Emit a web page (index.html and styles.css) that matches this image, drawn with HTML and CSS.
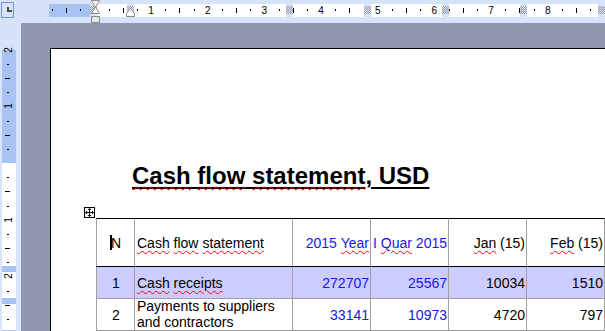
FILE: index.html
```html
<!doctype html>
<html lang="en-US">
<head>
<meta charset="utf-8" />
<meta name="viewport" content="width=device-width" />
<title>Cash flow statement, USD</title>
<link rel="stylesheet" href="styles.css">
</head>
<body>
<div class="app">

<!-- top ruler row: tab selector box + horizontal ruler -->
<div class="topbar">
	<div class="corner"><span class="tabmark"></span></div>
	<div class="hruler" id="hruler">
		<div class="seg-margin" style="width:41px"></div>
		<div class="col-mark"></div>
		<div class="seg" style="width:30px"></div>
		<div class="col-mark"></div>
		<div class="seg" style="width:152px"></div>
		<div class="col-mark"></div>
		<div class="seg" style="width:71px"></div>
		<div class="col-mark"></div>
		<div class="seg" style="width:71px"></div>
		<div class="col-mark"></div>
		<div class="seg" style="width:71px"></div>
		<div class="col-mark"></div>
		<div class="seg" style="width:71px"></div>
		<div class="col-mark"></div>

		<svg class="indent-mark" width="11" height="23" viewBox="0 0 11 23">
			<path d="M1.5 0.5h8l-4 6.5 4 6.5h-8l4-6.5z" fill="#fff" stroke="#8a8a8a" />
			<rect x="1.5" y="16.5" width="8" height="6" fill="#e6e6e6" stroke="#8a8a8a" />
		</svg>
		<svg class="cell-indent" width="9" height="9" viewBox="0 0 9 9">
			<path d="M0.5 8.5v-3l4-5 4 5v3z" fill="#fff" stroke="#8a8a8a" />
		</svg>
	</div>
</div>

<div class="main">
	<!-- vertical ruler -->
	<div class="vcol">
		<div class="vruler" id="vruler">
			<div class="vseg-blue" style="height:113px"></div>
			<div class="vseg" style="height:103px"></div>
			<div class="vseg-blue" style="height:6px"></div>
			<div class="vseg" style="height:26px"></div>
			<div class="vseg-blue" style="height:6px"></div>
			<div class="vseg" style="height:26px"></div>
			<div class="vseg-blue" style="height:1px"></div>
		</div>
	</div>

	<div class="workspace">
		<div class="page">
			<h1 class="title"><span class="sp">Cash</span> <span class="sp">flow</span> <span class="sp">statement</span>, USD</h1>

			<div class="table-wrap">
				<span class="move-handle">
					<svg width="9" height="9" viewBox="0 0 9 9">
						<path d="M4.5 1v7M1 4.5h7" stroke="#000" />
						<path d="M4.5 0l2 2h-4zM4.5 9l2-2h-4zM0 4.5l2-2v4zM9 4.5l-2-2v4z" fill="#000" />
					</svg>
				</span>
				<div class="grid">
					<div class="cell num-col head"><span class="cursor"></span>N</div>
					<div class="cell head">
						<span class="sp">Cash</span>&nbsp;<span class="sp">flow</span>&nbsp;<span class="sp">statement</span>
					</div>
					<div class="cell head right blue">2015&nbsp;<span class="sp">Year</span></div>
					<div class="cell head right blue">I&nbsp;<span class="sp">Quar</span>&nbsp;2015</div>
					<div class="cell head right"><span class="sp">Jan</span>&nbsp;(15)</div>
					<div class="cell head right"><span class="sp">Feb</span>&nbsp;(15)</div>

					<div class="cell num-col hl">1</div>
					<div class="cell hl"><span class="sp">Cash</span>&nbsp;<span class="sp">receipts</span></div>
					<div class="cell hl right blue">272707</div>
					<div class="cell hl right blue">25567</div>
					<div class="cell hl right">10034</div>
					<div class="cell hl right">1510</div>

					<div class="cell num-col">2</div>
					<div class="cell wrap">Payments to suppliers<br>and contractors</div>
					<div class="cell right blue">33141</div>
					<div class="cell right blue">10973</div>
					<div class="cell right">4720</div>
					<div class="cell right">797</div>
				</div>
			</div>
		</div>
	</div>
</div>

</div>

<script>
	// ruler ticks: a quarter step of 1.5 cm is 14.17px, big numbers every 4 steps
	const step = 14.17;
	const hruler = document.getElementById("hruler");
	const vruler = document.getElementById("vruler");

	function tick(parent, cls, prop, value, text) {
		const el = document.createElement("div");
		el.className = cls;
		el.style[prop] = value.toFixed(1) + "px";
		if (text) el.textContent = text;
		parent.appendChild(el);
	}

	// horizontal ruler starts at x=52, zero sits at x=97.3
	for (let k = -3; k <= 35; k++) {
		if (k === 0) continue;
		const x = 97.3 + step * k - 52;
		if (k % 4 === 0) tick(hruler, "h-num", "left", x, String(k / 4));
		else if (Math.abs(k % 4) === 2) tick(hruler, "h-line", "left", x);
		else tick(hruler, "h-dot", "left", x);
	}

	// vertical ruler starts at y=50, zero (top margin) at y=163
	for (let k = -8; k <= 11; k++) {
		if (k === 0) continue;
		const y = 163 + step * k - 50;
		if (k % 4 === 0) tick(vruler, "v-num", "top", y, String(Math.abs(k / 4)));
		else if (Math.abs(k % 4) === 2) tick(vruler, "v-line", "top", y);
		else tick(vruler, "v-dot", "top", y);
	}
</script>
</body>
</html>
```

FILE: styles.css
```css
body {
	margin: 0;
	overflow: hidden;
	font-family: "Liberation Sans", Arial, sans-serif;
	background-color: #d6e3f8;
}
.app {
	display: flex;
	flex-direction: column;
	height: 100vh;
}

/* top ruler */
.topbar {
	display: flex;
	flex: none;
	height: 23px;
	overflow: hidden;
}
.corner {
	box-sizing: border-box;
	width: 16px;
	height: 16px;
	margin: 2px 0 0 1px;
	border: 1px solid #6f95da;
}
.tabmark {
	display: block;
	width: 3px;
	height: 3px;
	margin: 4px 0 0 5px;
	border-left: 2px solid #474747;
	border-bottom: 2px solid #474747;
}
.hruler {
	position: relative;
	display: flex;
	flex: 1;
	height: 13px;
	margin: 4px 0 0 35px;
}
.seg-margin {
	flex: none;
	background-color: #a6c3f4;
}
.seg {
	flex: none;
	background-color: #fff;
}
.col-mark {
	position: relative;
	z-index: 1;
	flex: none;
	box-sizing: border-box;
	width: 7px;
	border-top: 2px solid #d6e3f8;
	border-bottom: 3px solid #d6e3f8;
	background-color: #d6e3f8;
	background-image: repeating-conic-gradient(#9c9c9c 0 25%, transparent 0 50%);
	background-size: 2px 2px;
}
.indent-mark {
	position: absolute;
	z-index: 2;
	left: 41px;
	top: -4px;
}
.cell-indent {
	position: absolute;
	z-index: 2;
	left: 77px;
	top: 4px;
}
.h-dot, .h-line, .h-num {
	position: absolute;
}
.h-dot {
	top: 5px;
	width: 1px;
	height: 2px;
	background-color: #000;
}
.h-line {
	top: 4px;
	width: 1px;
	height: 5px;
	background-color: #000;
}
.h-num {
	top: 0;
	font-size: 10px;
	line-height: 13px;
	color: #000;
	transform: translateX(-50%);
}

/* left column: vertical ruler */
.main {
	display: flex;
	flex: 1;
	min-height: 0;
}
.vcol {
	flex: none;
	width: 21px;
}
.vruler {
	position: relative;
	display: flex;
	flex-direction: column;
	width: 14px;
	margin: 27px 0 0 2px;
}
.vseg-blue {
	flex: none;
	background-color: #a6c3f4;
}
.vseg {
	flex: none;
	background-color: #fff;
}
.v-dot, .v-line, .v-num {
	position: absolute;
}
.v-dot {
	left: 5px;
	width: 2px;
	height: 1px;
	background-color: #000;
}
.v-line {
	left: 3px;
	width: 5px;
	height: 1px;
	background-color: #000;
}
.v-num {
	left: 0;
	width: 14px;
	font-size: 10px;
	line-height: 12px;
	text-align: center;
	transform: translateY(-50%) rotate(-90deg);
}

/* grey document area */
.workspace {
	flex: 1;
	display: flex;
	overflow: hidden;
	padding: 25px 0 0 29px;
	background-color: #8f98ad;
}
.page {
	flex: none;
	width: 700px;
	background-color: #fff;
	border-left: 1px solid #000;
	border-top: 1px solid #000;
}
.title {
	margin: 113px 0 0 81px;
	font-size: 24px;
	line-height: 28px;
	font-weight: bold;
	color: #000;
	text-decoration: underline 2px solid #000;
	text-underline-offset: 3px;
}
.sp {
	text-decoration: underline wavy #ff0000;
	text-decoration-thickness: 1px;
	text-underline-offset: 2px;
}

/* table */
.table-wrap {
	position: relative;
	margin: 28px 0 0 45px;
}
.move-handle {
	position: absolute;
	left: -12px;
	top: -11px;
	box-sizing: border-box;
	display: flex;
	align-items: center;
	justify-content: center;
	width: 11px;
	height: 11px;
	border: 1px solid #000;
	background-color: #fff;
}
.grid {
	display: grid;
	grid-template-columns: 39px 158px 78px 78px 78px 78px;
	grid-template-rows: 49px 32px 32px;
	font-size: 14px;
	color: #000;
}
.cell {
	position: relative;
	box-sizing: border-box;
	display: flex;
	align-items: center;
	padding: 0 1px 0 2px;
	white-space: nowrap;
	border-right: 1px solid #a0a0a0;
	border-bottom: 1px solid #a0a0a0;
}
.cell.head {
	border-top: 1px solid #000;
	border-bottom-color: #000;
}
.num-col {
	justify-content: center;
	border-left: 1px solid #a0a0a0;
}
.right {
	justify-content: flex-end;
}
.blue {
	color: #1616ee;
}
.hl {
	background-color: #ccccff;
}
.wrap {
	white-space: normal;
	line-height: 15.5px;
}
.cursor {
	position: absolute;
	left: 13px;
	top: 16px;
	width: 2px;
	height: 15px;
	background-color: #000;
}
```
